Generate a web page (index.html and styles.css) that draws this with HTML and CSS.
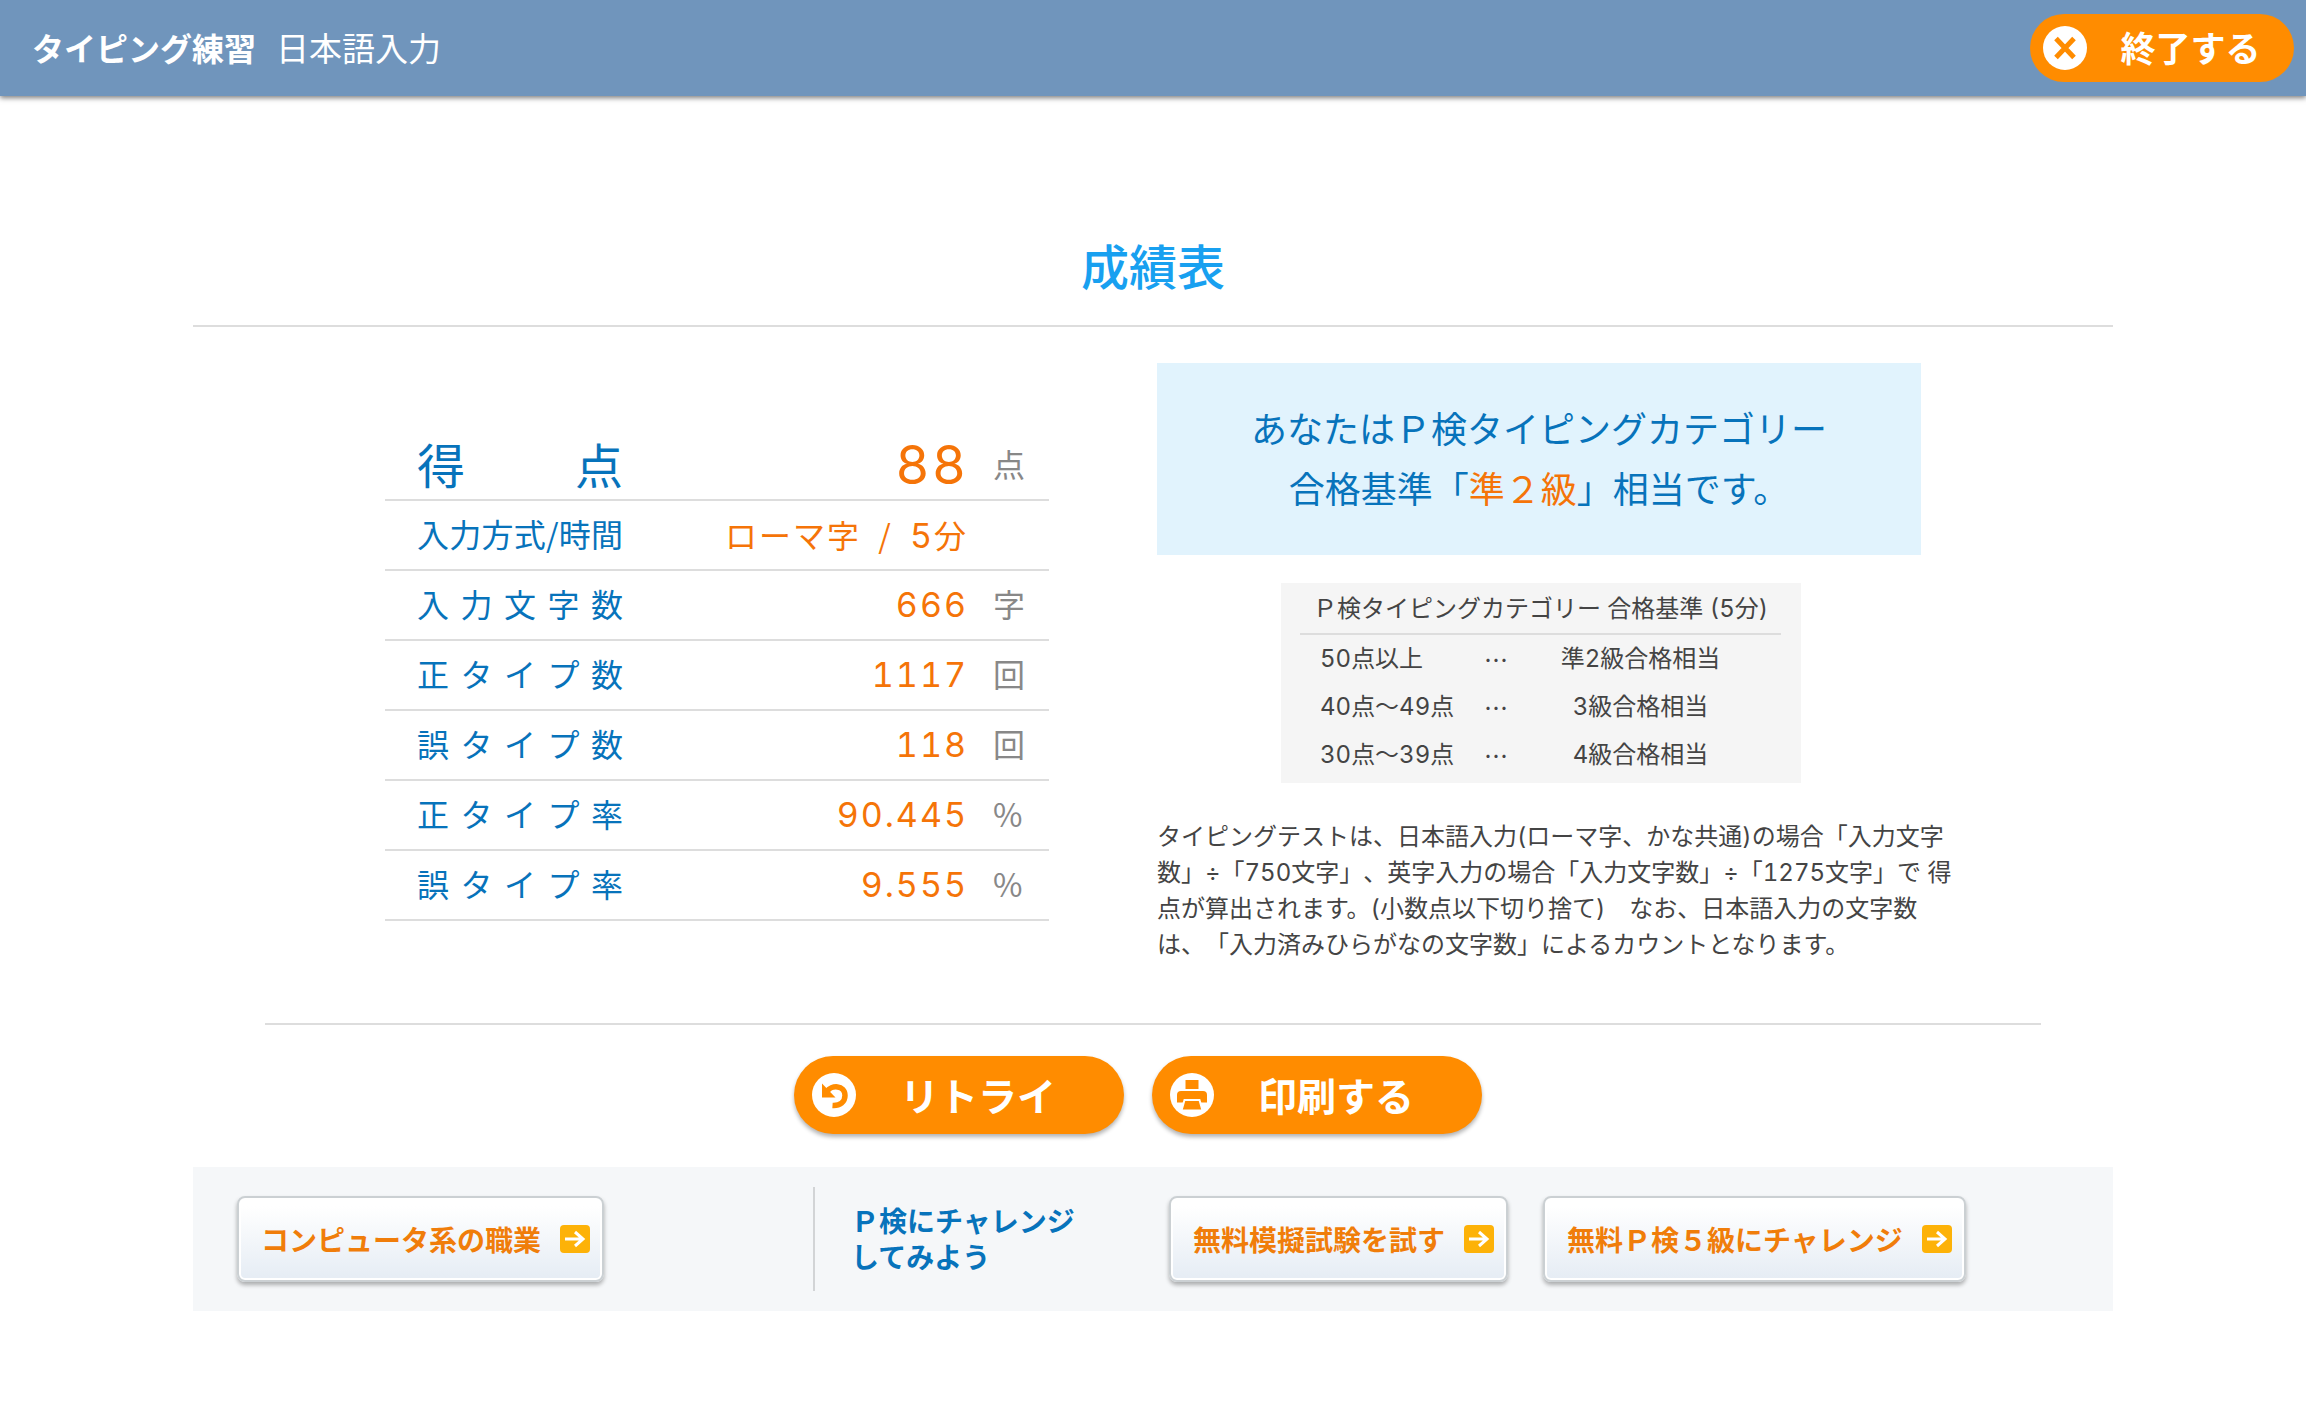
FILE: index.html
```html
<!DOCTYPE html>
<html lang="ja">
<head>
<meta charset="utf-8">
<meta name="viewport" content="width=device-width, initial-scale=1">
<title>タイピング練習 日本語入力 - 成績表</title>
<link rel="stylesheet" href="styles.css">
</head>
<body>
<header class="site-header">
  <p class="site-title"><strong>タイピング練習</strong><span class="site-mode">日本語入力</span></p>
  <button type="button" class="pill pill-exit">
    <svg class="pill-icon" viewBox="0 0 44 44" aria-hidden="true">
      <circle cx="22" cy="22" r="22" fill="#fff"/>
      <path d="M13 12.500 31 31.500M31 12.500 13 31.500" stroke="#ff8c00" stroke-width="5" fill="none"/>
    </svg>
    <span class="pill-label">終了する</span>
  </button>
</header>

<main class="report">
  <h1 class="report-title">成績表</h1>

  <div class="report-body">
    <table class="score">
      <tbody>
        <tr class="score-total"><th scope="row"><span class="label">得点</span></th><td class="value">88</td><td class="unit">点</td></tr>
        <tr><th scope="row"><span class="label">入力方式/時間</span></th><td class="value"><span class="mode">ローマ字 <span class="slash">/</span> </span>5<span class="mode">分</span></td><td class="unit"></td></tr>
        <tr><th scope="row"><span class="label">入力文字数</span></th><td class="value">666</td><td class="unit">字</td></tr>
        <tr><th scope="row"><span class="label">正タイプ数</span></th><td class="value">1117</td><td class="unit">回</td></tr>
        <tr><th scope="row"><span class="label">誤タイプ数</span></th><td class="value">118</td><td class="unit">回</td></tr>
        <tr><th scope="row"><span class="label">正タイプ率</span></th><td class="value">90.445</td><td class="unit">%</td></tr>
        <tr><th scope="row"><span class="label">誤タイプ率</span></th><td class="value">9.555</td><td class="unit">%</td></tr>
      </tbody>
    </table>

    <section class="verdict">
      <p class="verdict-box">あなたはＰ検タイピングカテゴリー<br>合格基準「<em>準２級</em>」相当です。</p>

      <div class="criteria">
        <table class="criteria-table">
          <caption>Ｐ検タイピングカテゴリー 合格基準 (5分)</caption>
          <tbody>
            <tr><th scope="row">50点以上</th><td class="dots">…</td><td class="grade">準2級合格相当</td></tr>
            <tr><th scope="row">40点～49点</th><td class="dots">…</td><td class="grade">3級合格相当</td></tr>
            <tr><th scope="row">30点～39点</th><td class="dots">…</td><td class="grade">4級合格相当</td></tr>
          </tbody>
        </table>
      </div>

      <p class="note">タイピングテストは、日本語入力(ローマ字、かな共通)の場合「入力文字数」÷「750文字」、英字入力の場合「入力文字数」÷「1275文字」で 得点が算出されます。(小数点以下切り捨て)　なお、日本語入力の文字数は、「入力済みひらがなの文字数」によるカウントとなります。</p>
    </section>
  </div>

  <div class="actions">
    <button type="button" class="pill pill-action">
      <svg class="pill-icon" viewBox="0 0 44 44" aria-hidden="true">
        <circle cx="22" cy="22" r="22" fill="#fff"/>
        <path d="M15 18.500C19 12 33 11.500 33 22.500 33 29 28 33 20.500 32.500" stroke="#ff8c00" stroke-width="5.500" fill="none"/>
        <path d="M10 10.500V24.500H23.500Z" fill="#ff8c00"/>
      </svg>
      <span class="pill-label">リトライ</span>
    </button>
    <button type="button" class="pill pill-action">
      <svg class="pill-icon" viewBox="0 0 44 44" aria-hidden="true">
        <circle cx="22" cy="22" r="22" fill="#fff"/>
        <path d="M15.500 7H28.500V16H15.500Z" fill="#ff8c00"/>
        <path d="M11 18H33Q37 18 37 22V29.500H7V22Q7 18 11 18Z" fill="#ff8c00"/>
        <path d="M14.500 27H29.500L32.500 37.500H11.500Z" fill="#ff8c00" stroke="#fff" stroke-width="2"/>
      </svg>
      <span class="pill-label">印刷する</span>
    </button>
  </div>

  <nav class="links">
    <div class="links-job">
      <a class="card-link" href="#">コンピュータ系の職業
        <svg class="arrow" viewBox="0 0 30 28" aria-hidden="true"><rect width="30" height="28" rx="4" fill="#fdb208"/><path d="M5 14H23M15 7 23 14 15 21" stroke="#fff" stroke-width="3" fill="none"/></svg></a>
    </div>
    <div class="links-challenge">
      <p class="links-heading">Ｐ検にチャレンジ<br>してみよう</p>
      <a class="card-link" href="#">無料模擬試験を試す
        <svg class="arrow" viewBox="0 0 30 28" aria-hidden="true"><rect width="30" height="28" rx="4" fill="#fdb208"/><path d="M5 14H23M15 7 23 14 15 21" stroke="#fff" stroke-width="3" fill="none"/></svg></a>
      <a class="card-link" href="#">無料Ｐ検５級にチャレンジ
        <svg class="arrow" viewBox="0 0 30 28" aria-hidden="true"><rect width="30" height="28" rx="4" fill="#fdb208"/><path d="M5 14H23M15 7 23 14 15 21" stroke="#fff" stroke-width="3" fill="none"/></svg></a>
    </div>
  </nav>
</main>
</body>
</html>
```
FILE: styles.css
```css
* {
  box-sizing: border-box;
}

body {
  margin: 0;
  background: #fff;
  color: #444;
  font-family: "Noto Sans CJK JP", sans-serif;
  font-size: 24px;
  line-height: 36px;
  text-spacing-trim: space-all;
}

p,
h1 {
  margin: 0;
}

/* Header */
.site-header {
  display: flex;
  align-items: center;
  justify-content: space-between;
  height: 96px;
  padding: 0 12px 0 32px;
  background: #7095bc;
  box-shadow: 0 2px 5px rgba(0, 0, 0, 0.5);
}

.site-title {
  display: flex;
  gap: 20px;
  padding-bottom: 2px;
  color: #fff;
  font-size: 32px;
  line-height: 48px;
}

.site-mode {
  font-size: 33px;
}

/* Orange pill buttons */
.pill {
  display: flex;
  align-items: center;
  border: 0;
  border-radius: 39px;
  background: #ff8c00;
  color: #fff;
  font-family: inherit;
  font-weight: 700;
  line-height: 48px;
  cursor: pointer;
}

.pill-icon {
  flex: none;
  width: 44px;
  height: 44px;
}

.pill-label {
  flex: 1;
  padding-bottom: 2px;
  text-align: center;
}

.pill-exit {
  width: 264px;
  height: 68px;
  padding: 0 0 0 13px;
  font-size: 35px;
}

.pill-action {
  width: 330px;
  height: 78px;
  padding: 0 24px 0 18px;
  font-size: 39px;
  box-shadow: 0 3px 4px rgba(0, 0, 0, 0.3);
}

/* Report */
.report {
  max-width: 1920px;
  margin: 0 auto;
  padding: 132px 0 48px;
}

.report-title {
  padding-bottom: 25px;
  border-bottom: 2px solid #ddd;
  color: #18a0f0;
  font-size: 48px;
  font-weight: 500;
  line-height: 72px;
  text-align: center;
}

.report-body {
  display: grid;
  grid-template-columns: minmax(0, 664px) minmax(0, 800px);
  column-gap: 108px;
  align-items: start;
  padding: 36px 0 0 10%;
}

/* Score table */
.score {
  width: 100%;
  margin-top: 68px;
  border-spacing: 0;
  font-size: 32px;
  line-height: 48px;
}

.score th,
.score td {
  height: 70px;
  padding: 0;
  border-bottom: 2px solid #ddd;
  font-weight: 400;
}

.score th {
  padding: 0 0 4px 32px;
  color: #0773bb;
  text-align: left;
}

.label {
  display: block;
  width: 206px;
  text-align: justify;
  text-align-last: justify;
}

.score .value {
  padding-right: 24px;
  color: #f57408;
  font-family: Inter, "Noto Sans CJK JP", sans-serif;
  font-size: 34px;
  font-variant-numeric: tabular-nums;
  letter-spacing: 2px;
  text-align: right;
}

.value .mode {
  font-family: "Noto Sans CJK JP", sans-serif;
  font-size: 32px;
}

.value .slash {
  padding: 0 8px;
}

.score .unit {
  width: 57px;
  padding: 0 0 4px 1px;
  color: #888;
}

.score-total .label {
  font-size: 48px;
}

.score-total .value {
  font-size: 53px;
}

/* Verdict */
.verdict-box {
  width: 764px;
  max-width: 100%;
  padding: 34px 0 38px;
  background: #e1f3fd;
  color: #0773bb;
  font-size: 36px;
  line-height: 60px;
  text-align: center;
}

.verdict-box em {
  color: #f57408;
  font-style: normal;
}

.criteria {
  width: 520px;
  margin: 28px 0 0 124px;
  padding: 8px 20px 4px 19px;
  background: #f5f5f5;
  font-family: Inter, "Noto Sans CJK JP", sans-serif;
  font-variant-numeric: tabular-nums;
}

.criteria-table {
  width: 100%;
  border-spacing: 0;
}

.criteria-table caption {
  padding: 0 0 6px;
  border-bottom: 2px solid #ddd;
}

.criteria-table th,
.criteria-table td {
  height: 48px;
  padding: 0;
  font-weight: 400;
}

.criteria-table th {
  width: 172px;
  padding-left: 20px;
  text-align: left;
}

.criteria-table .dots {
  width: 48px;
  font-family: "Noto Sans CJK JP", sans-serif;
  text-align: center;
}

.criteria-table .grade {
  padding-right: 20px;
  text-align: center;
}

.note {
  margin-top: 36px;
  font-family: Inter, "Noto Sans CJK JP", sans-serif;
  font-variant-numeric: tabular-nums;
}

/* Action buttons */
.actions {
  display: flex;
  justify-content: center;
  gap: 28px;
  margin: 60px 72px 0;
  padding: 31px 30px 33px 0;
  border-top: 2px solid #ddd;
}

/* Related links */
.links {
  display: flex;
  align-items: center;
  min-height: 144px;
  padding: 20px 44px;
  background: #f5f7f9;
}

.links-job {
  width: 576px;
}

.links-challenge {
  display: flex;
  align-items: center;
  gap: 35px;
  min-height: 104px;
  padding-left: 36px;
  border-left: 2px solid #d2d4d6;
}

.links-heading {
  width: 283px;
  padding-bottom: 2px;
  color: #0773bb;
  font-size: 28px;
  font-weight: 700;
}

.card-link {
  display: inline-flex;
  align-items: center;
  gap: 19px;
  height: 86px;
  padding: 0 12px 0 22px;
  border: 2px solid #cbd0d3;
  border-radius: 8px;
  background: linear-gradient(#fff 10%, #e5ecf4);
  box-shadow: inset 0 0 0 2px #fff, 0 3px 4px rgba(0, 0, 0, 0.3);
  color: #f07d0a;
  font-size: 28px;
  font-weight: 700;
  text-decoration: none;
  white-space: nowrap;
}

.links-job .card-link {
  vertical-align: middle;
}

.arrow {
  flex: none;
  width: 30px;
  height: 28px;
}
```
